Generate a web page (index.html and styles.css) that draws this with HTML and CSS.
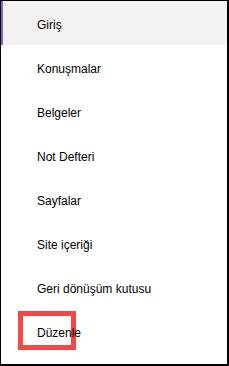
FILE: index.html
```html
<!DOCTYPE html>
<html lang="tr">
<head>
<meta charset="utf-8">
<title>Gezinti</title>
<link rel="stylesheet" href="styles.css">
</head>
<body>
<nav class="panel">
  <ul class="nav">
    <li class="item active">Giriş</li>
    <li class="item">Konuşmalar</li>
    <li class="item">Belgeler</li>
    <li class="item">Not Defteri</li>
    <li class="item">Sayfalar</li>
    <li class="item">Site içeriği</li>
    <li class="item">Geri dönüşüm kutusu</li>
    <li class="item">Düzenle</li>
  </ul>
  <div class="highlight"></div>
</nav>
</body>
</html>
```
FILE: styles.css
```css
html, body {
  margin: 0;
  padding: 0;
  background: #ffffff;
}
body {
  width: 229px;
  height: 366px;
  overflow: hidden;
  font-family: "Liberation Sans", Arial, sans-serif;
}
.panel {
  position: relative;
  box-sizing: border-box;
  width: 229px;
  height: 366px;
  border-style: solid;
  border-color: #000;
  border-width: 1px 2px 2px 1px;
  background: #fff;
}
.nav {
  list-style: none;
  margin: 0;
  padding: 0;
  display: flex;
  flex-direction: column;
}
.item {
  position: relative;
  z-index: 2;
  box-sizing: border-box;
  height: 44px;
  padding: 4px 0 0 36px;
  line-height: 40px;
  font-size: 12px;
  color: #000;
  white-space: nowrap;
}
.item.active {
  background: #f3f2f1;
  box-shadow: inset 2px 0 0 #8764b8;
}
.highlight {
  position: absolute;
  z-index: 1;
  left: 17px;
  top: 310px;
  width: 58px;
  height: 39px;
  box-sizing: border-box;
  border: 5px solid #f44848;
}
```
